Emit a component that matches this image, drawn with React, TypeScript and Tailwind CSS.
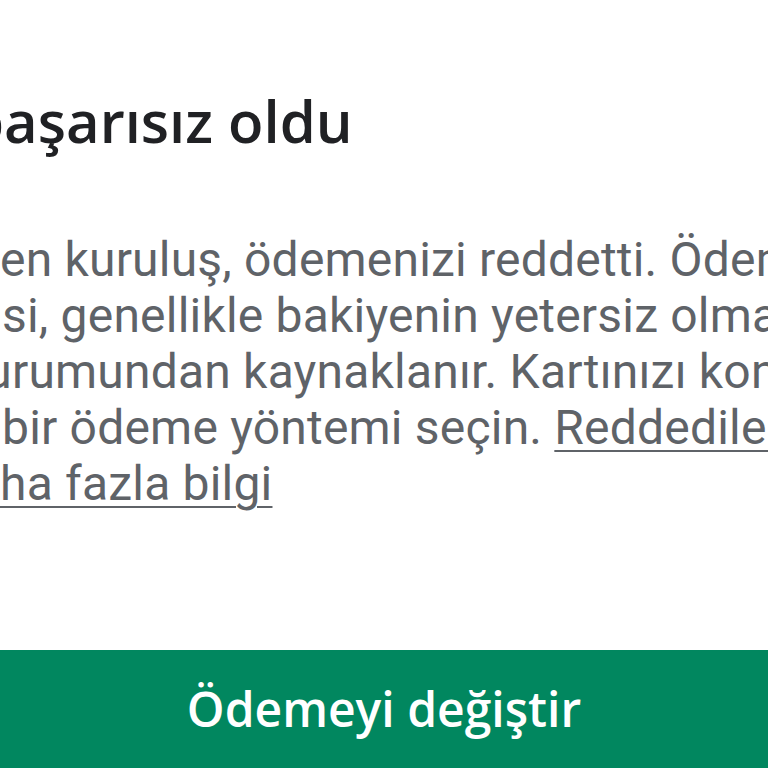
export default function App() {
  const lines = [
    { text: 'en kuruluş, ödemenizi reddetti. Ödeme', ml: 'ml-0' },
    { text: 'si, genellikle bakiyenin yetersiz olması', ml: 'ml-[2px]' },
    { text: 'durumundan kaynaklanır. Kartınızı kontrol', ml: '-ml-[42px]' },
  ]

  return (
    <div className="w-[768px] h-[768px] overflow-hidden bg-white flex flex-col">
      <div className="flex-1 overflow-hidden pt-[92px]">
        <h1
          className="-ml-[32px] whitespace-nowrap text-[58px] leading-[58px] font-semibold text-[#202124]"
          style={{ fontFamily: '"Open Sans", Roboto, sans-serif' }}
        >
          başarısız oldu
        </h1>
        <div
          className="mt-[82px] text-[48px] leading-[56px] tracking-[0.2px] text-[#5f6368] whitespace-nowrap"
          style={{ fontFamily: 'Roboto, "Noto Sans", sans-serif' }}
        >
          {lines.map(l => (
            <div key={l.text} className={l.ml}>{l.text}</div>
          ))}
          <div className="ml-[2px]">
            bir ödeme yöntemi seçin.{' '}
            <span className="underline decoration-2 underline-offset-[6px]">Reddedilen</span>
          </div>
          <div>
            <span className="underline decoration-2 underline-offset-[6px]">ha fazla bilgi</span>
          </div>
        </div>
      </div>
      <div className="h-[118px] shrink-0 bg-[#01875f] flex items-center justify-center">
        <span
          className="text-white text-[48px] font-semibold"
          style={{ fontFamily: '"Open Sans", Roboto, sans-serif' }}
        >
          Ödemeyi değiştir
        </span>
      </div>
    </div>
  )
}
